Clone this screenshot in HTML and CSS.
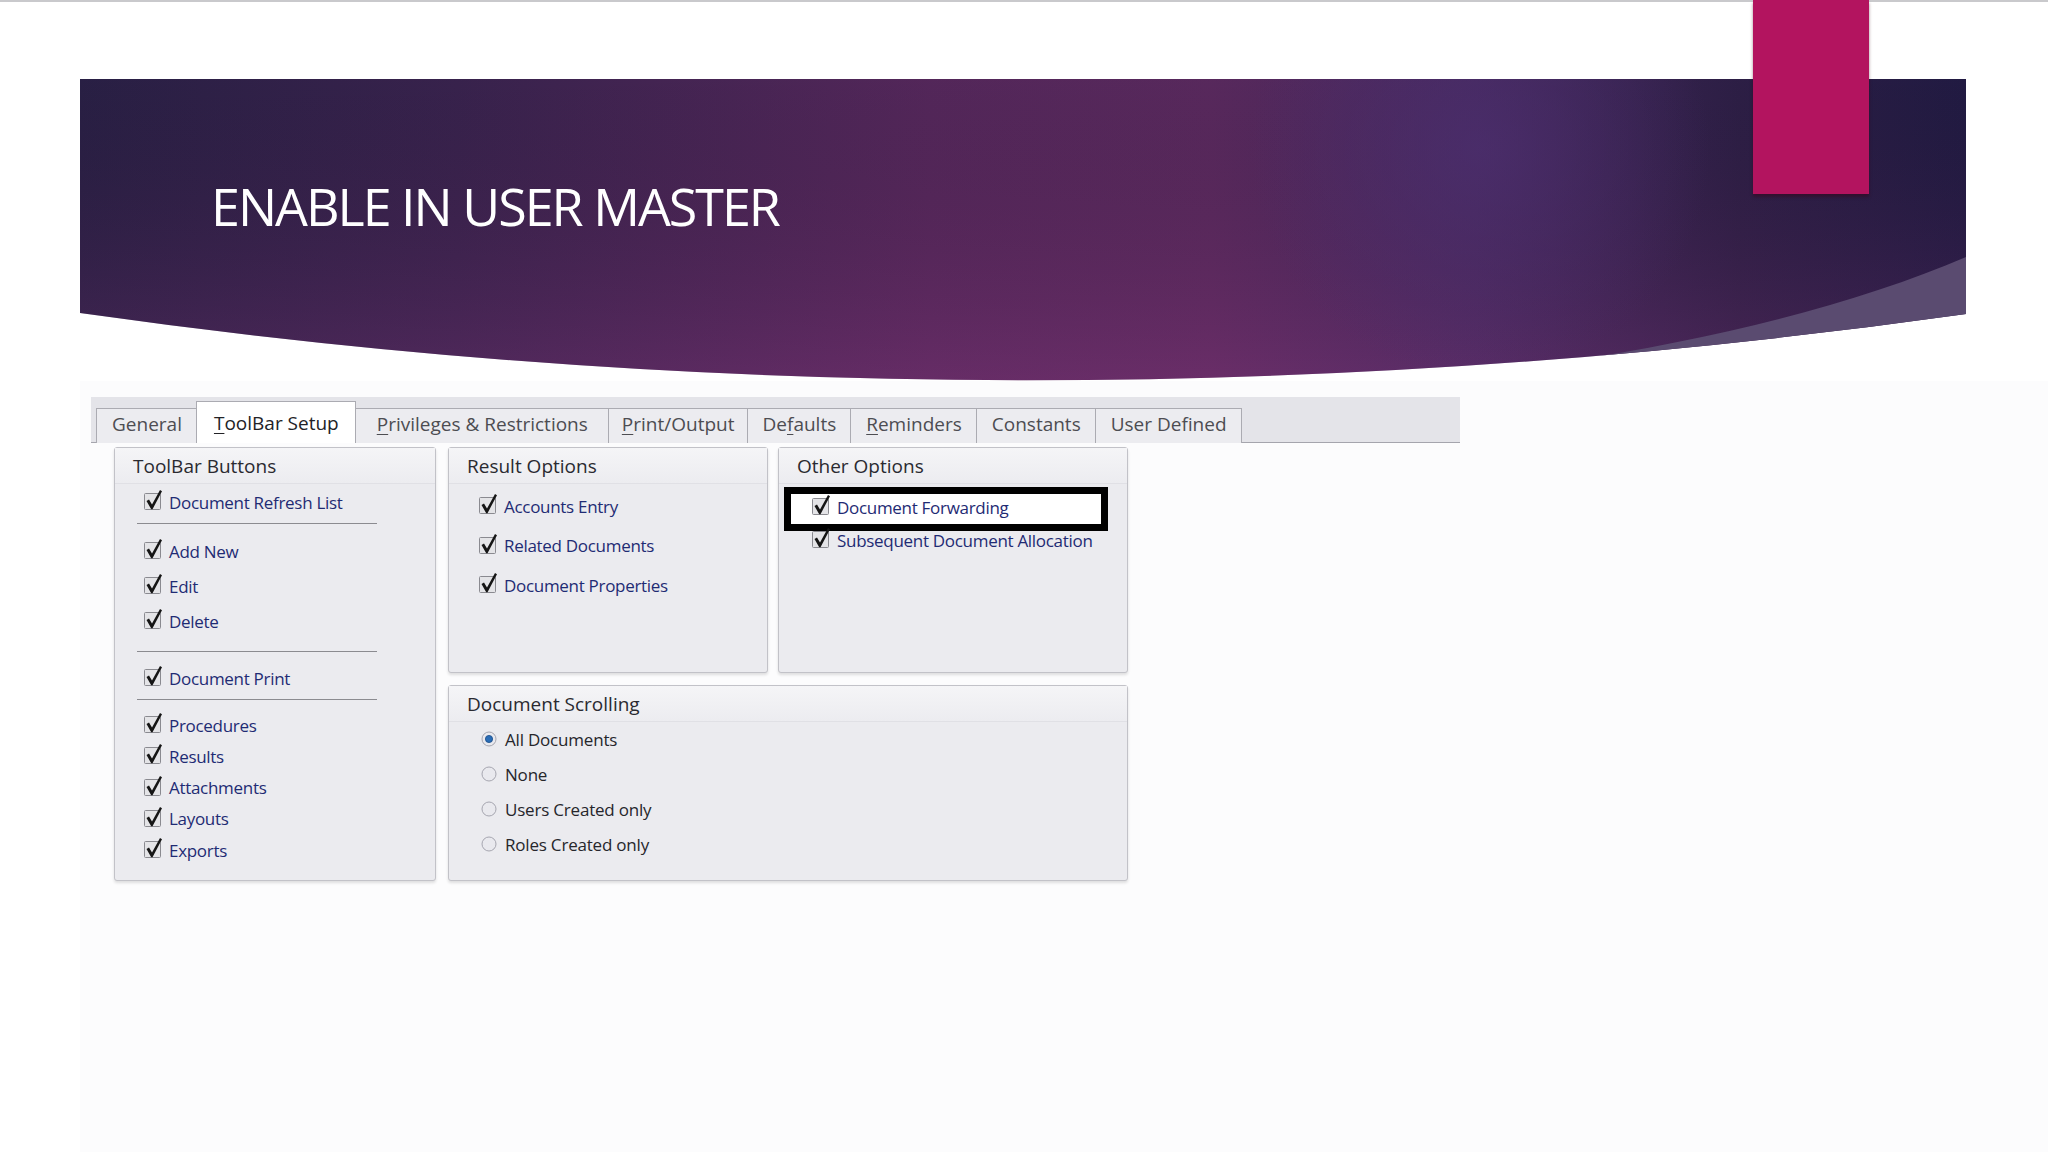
FILE: index.html
```html
<!DOCTYPE html>
<html>
<head>
<meta charset="utf-8">
<title>Enable in User Master</title>
<link rel="stylesheet" href="styles.css">
</head>
<body>
<div class="page">
  <div class="ribbon"></div>

  <div class="banner">
    <svg class="banner-bg" viewBox="0 0 1886 302" width="1886" height="302" aria-hidden="true">
      <defs>
        <linearGradient id="bgx" x1="0" y1="0" x2="1" y2="0">
          <stop offset="0" stop-color="#2b2148"/>
          <stop offset="0.2" stop-color="#3b2451"/>
          <stop offset="0.45" stop-color="#58295f"/>
          <stop offset="0.6" stop-color="#5d2b62"/>
          <stop offset="0.74" stop-color="#472a61"/>
          <stop offset="0.88" stop-color="#2f2049"/>
          <stop offset="1" stop-color="#231c46"/>
        </linearGradient>
        <linearGradient id="bgy" x1="0" y1="0" x2="0" y2="1">
          <stop offset="0" stop-color="#000" stop-opacity="0.06"/>
          <stop offset="1" stop-color="#8a3478" stop-opacity="0.28"/>
        </linearGradient>
        <radialGradient id="glow" cx="1400" cy="70" r="230" gradientUnits="userSpaceOnUse">
          <stop offset="0" stop-color="#4d2f70" stop-opacity="0.7"/>
          <stop offset="1" stop-color="#4d2f70" stop-opacity="0"/>
        </radialGradient>
        <clipPath id="shape">
          <path d="M0,0 H1886 V235 Q943,368 0,234 Z"/>
        </clipPath>
      </defs>
      <g clip-path="url(#shape)">
        <rect width="1886" height="302" fill="url(#bgx)"/>
        <rect width="1886" height="302" fill="url(#bgy)"/>
        <rect width="1886" height="302" fill="url(#glow)"/>
        <path d="M1886,178 C1760,232 1580,276 1360,298 L1360,310 L1886,310 Z" fill="#5a4b70"/>
      </g>
    </svg>
    <h1 class="title">ENABLE IN USER MASTER</h1>
  </div>

  <div class="dialog">
    <div class="tabbar">
      <div class="tab">General</div>
      <div class="tab tab-active"><u>T</u>oolBar Setup</div>
      <div class="tab tab-wide"><u>P</u>rivileges &amp; Restrictions</div>
      <div class="tab tab-narrow"><u>P</u>rint/Output</div>
      <div class="tab">De<u>f</u>aults</div>
      <div class="tab"><u>R</u>eminders</div>
      <div class="tab">Constants</div>
      <div class="tab">User Defined</div>
    </div>

    <div class="dialog-body">
      <section class="panel panel-toolbar">
        <div class="panel-head">ToolBar Buttons</div>
        <div class="tb-group tb-g1">
          <div class="row"><svg class="cb" viewBox="0 0 22 22"><rect x="1.5" y="4.5" width="16" height="16" rx="1"/><path d="M3.5,12 L6,10.5 L9,15.4 L17,1 L19,2.2 L9.5,20.2 L8.2,20.2 Z"/></svg><span class="lbl">Document Refresh List</span></div>
        </div>
        <div class="sep sep1"></div>
        <div class="tb-group tb-g2">
          <div class="row"><svg class="cb" viewBox="0 0 22 22"><rect x="1.5" y="4.5" width="16" height="16" rx="1"/><path d="M3.5,12 L6,10.5 L9,15.4 L17,1 L19,2.2 L9.5,20.2 L8.2,20.2 Z"/></svg><span class="lbl">Add New</span></div>
          <div class="row"><svg class="cb" viewBox="0 0 22 22"><rect x="1.5" y="4.5" width="16" height="16" rx="1"/><path d="M3.5,12 L6,10.5 L9,15.4 L17,1 L19,2.2 L9.5,20.2 L8.2,20.2 Z"/></svg><span class="lbl">Edit</span></div>
          <div class="row"><svg class="cb" viewBox="0 0 22 22"><rect x="1.5" y="4.5" width="16" height="16" rx="1"/><path d="M3.5,12 L6,10.5 L9,15.4 L17,1 L19,2.2 L9.5,20.2 L8.2,20.2 Z"/></svg><span class="lbl">Delete</span></div>
        </div>
        <div class="sep sep2"></div>
        <div class="tb-group tb-g3">
          <div class="row"><svg class="cb" viewBox="0 0 22 22"><rect x="1.5" y="4.5" width="16" height="16" rx="1"/><path d="M3.5,12 L6,10.5 L9,15.4 L17,1 L19,2.2 L9.5,20.2 L8.2,20.2 Z"/></svg><span class="lbl">Document Print</span></div>
        </div>
        <div class="sep sep3"></div>
        <div class="tb-group tb-g4">
          <div class="row"><svg class="cb" viewBox="0 0 22 22"><rect x="1.5" y="4.5" width="16" height="16" rx="1"/><path d="M3.5,12 L6,10.5 L9,15.4 L17,1 L19,2.2 L9.5,20.2 L8.2,20.2 Z"/></svg><span class="lbl">Procedures</span></div>
          <div class="row"><svg class="cb" viewBox="0 0 22 22"><rect x="1.5" y="4.5" width="16" height="16" rx="1"/><path d="M3.5,12 L6,10.5 L9,15.4 L17,1 L19,2.2 L9.5,20.2 L8.2,20.2 Z"/></svg><span class="lbl">Results</span></div>
          <div class="row"><svg class="cb" viewBox="0 0 22 22"><rect x="1.5" y="4.5" width="16" height="16" rx="1"/><path d="M3.5,12 L6,10.5 L9,15.4 L17,1 L19,2.2 L9.5,20.2 L8.2,20.2 Z"/></svg><span class="lbl">Attachments</span></div>
          <div class="row"><svg class="cb" viewBox="0 0 22 22"><rect x="1.5" y="4.5" width="16" height="16" rx="1"/><path d="M3.5,12 L6,10.5 L9,15.4 L17,1 L19,2.2 L9.5,20.2 L8.2,20.2 Z"/></svg><span class="lbl">Layouts</span></div>
          <div class="row"><svg class="cb" viewBox="0 0 22 22"><rect x="1.5" y="4.5" width="16" height="16" rx="1"/><path d="M3.5,12 L6,10.5 L9,15.4 L17,1 L19,2.2 L9.5,20.2 L8.2,20.2 Z"/></svg><span class="lbl">Exports</span></div>
        </div>
      </section>

      <div class="right-col">
        <div class="top-row">
          <section class="panel panel-result">
            <div class="panel-head">Result Options</div>
            <div class="res-list">
              <div class="row"><svg class="cb" viewBox="0 0 22 22"><rect x="1.5" y="4.5" width="16" height="16" rx="1"/><path d="M3.5,12 L6,10.5 L9,15.4 L17,1 L19,2.2 L9.5,20.2 L8.2,20.2 Z"/></svg><span class="lbl">Accounts Entry</span></div>
              <div class="row"><svg class="cb" viewBox="0 0 22 22"><rect x="1.5" y="4.5" width="16" height="16" rx="1"/><path d="M3.5,12 L6,10.5 L9,15.4 L17,1 L19,2.2 L9.5,20.2 L8.2,20.2 Z"/></svg><span class="lbl">Related Documents</span></div>
              <div class="row"><svg class="cb" viewBox="0 0 22 22"><rect x="1.5" y="4.5" width="16" height="16" rx="1"/><path d="M3.5,12 L6,10.5 L9,15.4 L17,1 L19,2.2 L9.5,20.2 L8.2,20.2 Z"/></svg><span class="lbl">Document Properties</span></div>
            </div>
          </section>
          <section class="panel panel-other">
            <div class="panel-head">Other Options</div>
            <div class="highlight">
              <div class="row"><svg class="cb" viewBox="0 0 22 22"><rect x="1.5" y="4.5" width="16" height="16" rx="1"/><path d="M3.5,12 L6,10.5 L9,15.4 L17,1 L19,2.2 L9.5,20.2 L8.2,20.2 Z"/></svg><span class="lbl">Document Forwarding</span></div>
            </div>
            <div class="row row-after"><svg class="cb" viewBox="0 0 22 22"><rect x="1.5" y="4.5" width="16" height="16" rx="1"/><path d="M3.5,12 L6,10.5 L9,15.4 L17,1 L19,2.2 L9.5,20.2 L8.2,20.2 Z"/></svg><span class="lbl">Subsequent Document Allocation</span></div>
          </section>
        </div>
        <section class="panel panel-scroll">
          <div class="panel-head">Document Scrolling</div>
          <div class="radio-list">
            <div class="row radio-row"><svg class="rb" viewBox="0 0 16 16"><circle class="rb-ring" cx="8" cy="8" r="7"/><circle class="rb-dot" cx="8" cy="8" r="3.6"/></svg><span class="rlbl">All Documents</span></div>
            <div class="row radio-row"><svg class="rb" viewBox="0 0 16 16"><circle class="rb-ring" cx="8" cy="8" r="7"/></svg><span class="rlbl">None</span></div>
            <div class="row radio-row"><svg class="rb" viewBox="0 0 16 16"><circle class="rb-ring" cx="8" cy="8" r="7"/></svg><span class="rlbl">Users Created only</span></div>
            <div class="row radio-row"><svg class="rb" viewBox="0 0 16 16"><circle class="rb-ring" cx="8" cy="8" r="7"/></svg><span class="rlbl">Roles Created only</span></div>
          </div>
        </section>
      </div>
    </div>
  </div>
</div>
</body>
</html>
```

FILE: styles.css
```css
* { box-sizing: border-box; }

html, body {
  margin: 0;
  padding: 0;
}

body {
  width: 2048px;
  height: 1152px;
  overflow: hidden;
  background-color: #ffffff;
  background-image: linear-gradient(to right, #ffffff 80px, #fcfcfd 80px);
  background-position: 0 381px;
  background-size: 2048px 771px;
  background-repeat: no-repeat;
  font-family: "Open Sans", "Liberation Sans", sans-serif;
}

.page {
  position: relative;
  height: 1152px;
  border-top: 2px solid #c9c9cc;
}

.ribbon {
  position: absolute;
  left: 1753px;
  top: -2px;
  width: 116px;
  height: 194px;
  background: #b3145f;
  box-shadow: 0 3px 3px rgba(60, 0, 20, 0.45);
  z-index: 2;
}

/* Banner */
.banner {
  position: relative;
  width: 1886px;
  height: 302px;
  margin: 77px 0 0 80px;
  padding: 101px 0 0 131px;
}

.banner-bg {
  position: absolute;
  left: 0;
  top: 0;
  display: block;
}

.title {
  position: relative;
  margin: 0;
  font-family: "Open Sans", "Liberation Sans", sans-serif;
  font-weight: 400;
  font-size: 52px;
  line-height: 52px;
  letter-spacing: -2px;
  color: #ffffff;
}

/* Dialog */
.dialog {
  width: 1369px;
  margin: 16px 0 0 91px;
}

.tabbar {
  height: 46px;
  display: flex;
  align-items: flex-end;
  padding-left: 5px;
  background: #e4e4e9;
  border-bottom: 1px solid #a5a5ad;
}

.tab {
  height: 35px;
  margin-bottom: -1px;
  margin-right: -1px;
  padding: 0 14px 0 15px;
  line-height: 31px;
  font-size: 19px;
  color: #4d4d52;
  background: #ececf0;
  border: 1px solid #ababb2;
  border-bottom: none;
  white-space: nowrap;
}

.tab u {
  text-decoration-thickness: 1px;
  text-underline-offset: 3px;
}

.tab-active {
  height: 42px;
  padding: 6px 16px 0 17px;
  background: #ffffff;
  color: #222226;
  position: relative;
  z-index: 1;
}

.tab-wide {
  padding: 0 20px 0 21px;
}

.tab-narrow {
  padding: 0 12px 0 13px;
}

.dialog-body {
  display: flex;
  gap: 12px;
  padding: 4px 0 0 23px;
}

.right-col {
  width: 680px;
  display: flex;
  flex-direction: column;
  gap: 12px;
}

.top-row {
  display: flex;
  gap: 10px;
}

/* Panels */
.panel {
  background: #ebebef;
  border: 1px solid #c2c2c8;
  border-radius: 3px;
  box-shadow: 0 2px 3px rgba(0, 0, 0, 0.12);
}

.panel-head {
  height: 36px;
  padding-left: 18px;
  display: flex;
  align-items: center;
  font-size: 19px;
  color: #2a2a30;
  background: linear-gradient(#f5f5f7, #ececf0);
  border-bottom: 1px solid #e0e0e5;
}

.panel-toolbar {
  width: 322px;
  height: 434px;
}

.panel-result {
  width: 320px;
  height: 226px;
}

.panel-other {
  width: 350px;
  height: 226px;
}

.panel-scroll {
  height: 196px;
}

/* Rows */
.row {
  height: 30px;
  display: flex;
  align-items: center;
}

.cb {
  width: 22px;
  height: 22px;
  flex: none;
  margin-right: 4px;
  margin-top: -4px;
}

.cb rect {
  fill: #e4e4e7;
  stroke: #8a8a90;
  stroke-width: 1;
}

.cb path {
  fill: #151515;
}

.lbl {
  font-size: 17px;
  letter-spacing: -0.3px;
  color: #1f2b74;
  white-space: nowrap;
}

/* ToolBar Buttons groups */
.tb-group {
  padding-left: 28px;
  display: flex;
  flex-direction: column;
}

.tb-g1 { margin-top: 3px; }
.tb-g2 { margin-top: 12px; gap: 5px; }
.tb-g3 { margin-top: 11px; }
.tb-g4 { margin-top: 10px; gap: 1.25px; }

.sep {
  width: 240px;
  height: 1px;
  margin-left: 22px;
  background: #8b8b90;
}

.sep1 { margin-top: 6px; }
.sep2 { margin-top: 15px; }
.sep3 { margin-top: 6px; }

/* Result Options */
.res-list {
  padding: 7px 0 0 29px;
  display: flex;
  flex-direction: column;
  gap: 9.5px;
}

/* Other Options */
.highlight {
  width: 324px;
  height: 44px;
  margin: 3px 0 0 5px;
  padding-left: 20px;
  border: 7px solid #000000;
  background: #ffffff;
}

.highlight .row {
  height: 26px;
}

.row-after {
  height: 18px;
  padding-left: 32px;
}

/* Document Scrolling */
.radio-list {
  padding: 3px 0 0 32px;
  display: flex;
  flex-direction: column;
  gap: 7px;
}

.radio-row {
  height: 28px;
}

.rb {
  width: 16px;
  height: 16px;
  flex: none;
  margin-right: 8px;
}

.rb-ring {
  fill: #e9e9ee;
  stroke: #a6a6b0;
  stroke-width: 1;
}

.rb-dot {
  fill: #2a6db6;
  stroke: #184a86;
  stroke-width: 0.8;
}

.rlbl {
  font-size: 17px;
  letter-spacing: -0.2px;
  color: #26262b;
  white-space: nowrap;
}
```
